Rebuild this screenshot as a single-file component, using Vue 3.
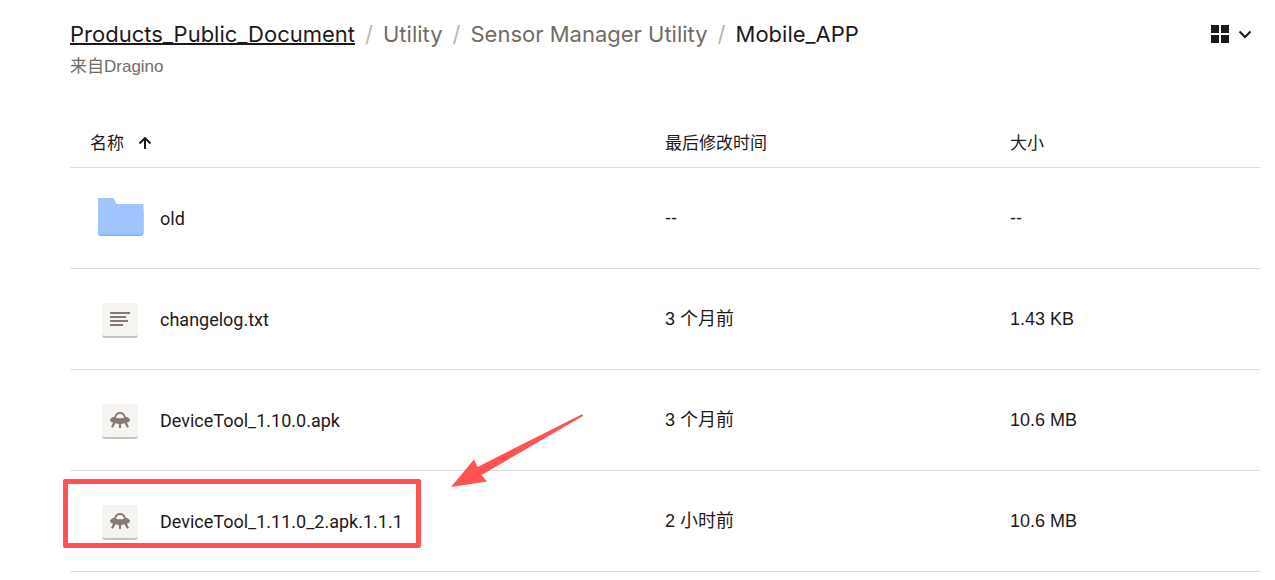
<script setup>
const crumbs = ['Utility', 'Sensor Manager Utility']
const files = [
  { name: 'old', kind: 'folder', modified: '--', size: '--' },
  { name: 'changelog.txt', kind: 'text', modified: '3 个月前', size: '1.43 KB' },
  { name: 'DeviceTool_1.10.0.apk', kind: 'apk', modified: '3 个月前', size: '10.6 MB' },
  { name: 'DeviceTool_1.11.0_2.apk.1.1.1', kind: 'apk', modified: '2 小时前', size: '10.6 MB' },
]
</script>

<template>
  <main class="page">
    <header class="top">
      <div>
        <nav class="crumbs" aria-label="Breadcrumb">
          <a class="root" href="#">Products_Public_Document</a>
          <template v-for="crumb in crumbs" :key="crumb">
            <span class="slash">/</span>
            <a class="crumb" href="#">{{ crumb }}</a>
          </template>
          <span class="slash">/</span>
          <span class="current">Mobile_APP</span>
        </nav>
        <p class="owner">来自Dragino</p>
      </div>
      <button class="view" type="button" aria-label="Grid view">
        <svg width="44" height="20" viewBox="0 0 44 20" aria-hidden="true">
          <path fill="#1e1919" d="M0 1h8v8H0zM10 1h8v8h-8zM0 11h8v8H0zM10 11h8v8h-8z" />
          <path fill="none" stroke="#1e1919" stroke-width="2" d="M28.500 7.500l5.500 5.500 5.500-5.500" />
        </svg>
      </button>
    </header>

    <table class="files">
      <colgroup>
        <col />
        <col class="col-modified" />
        <col class="col-size" />
      </colgroup>
      <thead>
        <tr>
          <th scope="col">
            <button class="sort" type="button">
              名称
              <svg width="14" height="14" viewBox="0 0 14 14" aria-hidden="true">
                <path fill="none" stroke="#1e1919" stroke-width="2" d="M7 12V1M1.500 6.500L7 1l5.500 5.500" />
              </svg>
            </button>
          </th>
          <th scope="col">最后修改时间</th>
          <th scope="col">大小</th>
        </tr>
      </thead>
      <tbody>
        <tr v-for="file in files" :key="file.name">
          <td>
            <a class="file" href="#">
              <svg v-if="file.kind === 'folder'" width="60" height="44" viewBox="0 0 60 44" aria-hidden="true">
                <path fill="#7fb0fc" d="M8 14h45.500v23q0 3-3 3H11q-3 0-3-3z" />
                <path fill="#a1c4ff" d="M8 3q0-1 1-1h13.500q1.500 0 2 1.500L26 7q.5 1 1.500 1H53q.5 0 .5.500V35.500q0 3-3 3H11Q8 38.500 8 35.500z" />
              </svg>
              <svg v-else width="60" height="44" viewBox="0 0 60 44" aria-hidden="true">
                <rect x="12" y="8" width="36" height="33" rx="3" fill="#c9c2bb" />
                <rect x="12" y="6" width="36" height="33" rx="2" fill="#f6f4f0" />
                <path v-if="file.kind === 'text'" fill="#857a72" d="M20 15h20v2H20zM20 19h16v2H20zM20 23h18v2H20zM20 27h13v2H20z" />
                <path v-else fill="#857a72" fill-rule="evenodd" d="M24.500 18.500Q25.500 14 30 14t5.500 4.500q4.500 1.500 4.500 3.500 0 1.800-3 2.700l2 4.300-2 .8-2.500-4.600-3.500.7V30h-2v-4.100l-3.500-.7-2.500 4.600-2-.8 2-4.300Q20 23.800 20 22q0-2 4.500-3.500zM26 19.800q4 1 8 0Q33.500 16 30 16t-4 3.800z" />
              </svg>
              <span class="name">{{ file.name }}</span>
            </a>
          </td>
          <td>{{ file.modified }}</td>
          <td>{{ file.size }}</td>
        </tr>
      </tbody>
    </table>

    <div class="frame"></div>
    <svg class="arrow" width="134" height="76" viewBox="0 0 134 76" aria-hidden="true">
      <path fill="#ff5252" d="M1 75L24 47.500l3.500 7.500L131.500 2.500q2-.5 1.500 1.500L31.500 63l5.500 6.500z" />
    </svg>
  </main>
</template>

<style>
body {
  margin: 0;
  background: #fff;
}
</style>

<style scoped>
.page {
  position: relative;
  padding: 20px 15px 8px 70px;
  color: #1e1919;
  font: 18px/26px "Liberation Sans", "Noto Sans CJK SC", sans-serif;
}
.top {
  display: flex;
  justify-content: space-between;
}
a {
  color: inherit;
  text-decoration: none;
}
button {
  padding: 0;
  border: 0;
  background: none;
  color: inherit;
  font: inherit;
  cursor: pointer;
}
.crumbs {
  display: flex;
  gap: 10px;
  font: 22px/28px Inter, "Noto Sans CJK SC", sans-serif;
  white-space: nowrap;
}
.crumbs .root {
  text-decoration: underline;
  text-decoration-thickness: 2px;
  text-decoration-skip-ink: none;
  text-underline-offset: 1px;
}
.crumbs .crumb {
  color: #736c64;
}
.slash {
  color: #bbb5ae;
}
.owner {
  margin: 7px 0 0;
  color: #736c64;
  font-size: 17px;
  line-height: 24px;
}
.view {
  height: 28px;
  margin-right: 5px;
}
.view svg {
  display: block;
}
.files {
  width: 100%;
  margin-top: 39px;
  border-spacing: 0;
  table-layout: fixed;
}
.col-modified {
  width: 345px;
}
.col-size {
  width: 270px;
}
th,
td {
  box-sizing: border-box;
  padding: 0 0 0 20px;
  border-bottom: 1px solid #dcdcdc;
  text-align: left;
  white-space: nowrap;
}
th {
  height: 50px;
  padding-top: 2px;
  font-size: 17px;
  font-weight: 400;
}
td {
  height: 101px;
}
.sort {
  display: flex;
  align-items: center;
  gap: 14px;
}
.file {
  display: flex;
  align-items: center;
  gap: 10px;
  font-family: Roboto, "Noto Sans CJK SC", sans-serif;
}
.file svg {
  flex: none;
}
.name {
  padding-top: 2px;
}
.frame {
  position: absolute;
  top: 479px;
  left: 63px;
  box-sizing: border-box;
  width: 358px;
  height: 69px;
  border: 5px solid #ff5252;
  border-radius: 2px;
}
.arrow {
  position: absolute;
  top: 412px;
  left: 450px;
}
</style>
